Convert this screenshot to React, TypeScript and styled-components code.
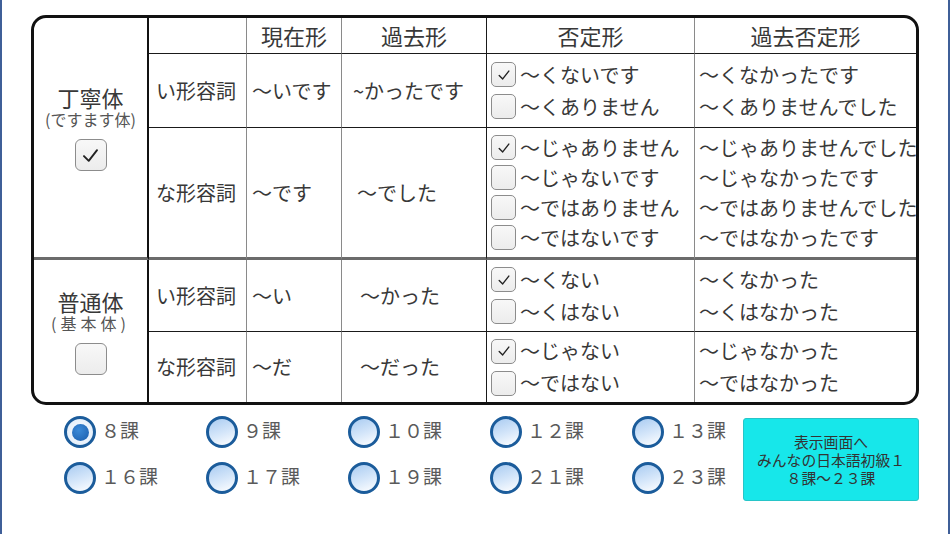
import styled, { createGlobalStyle } from "styled-components";

const GlobalStyle = createGlobalStyle`
  html, body {
    margin: 0;
    padding: 0;
    background: #ffffff;
  }
  body {
    font-family: "Noto Sans CJK JP", "Noto Sans", sans-serif;
    color: #383838;
  }
`;

const Screen = styled.div`
  box-sizing: border-box;
  width: 950px;
  height: 534px;
  border-left: 2px solid #3f5f98;
  border-right: 2px solid #3f5f98;
  padding: 15px 0 0 29px;
  background: #ffffff;
  overflow: hidden;
`;

const Table = styled.div`
  box-sizing: border-box;
  width: 888px;
  height: 390px;
  border: 3px solid #111111;
  border-radius: 15px;
  overflow: hidden;
  display: grid;
  grid-template-columns: 115px 98px 95px 145px 208px 221px;
  grid-template-rows: 36px 74px 132px 72px 70px;
`;

type Line = "black" | "gray" | "thick" | "none";

const lineCss = (l: Line) =>
  l === "black"
    ? "1.5px solid #1a1a1a"
    : l === "gray"
    ? "1px solid #8a8a8a"
    : l === "thick"
    ? "3px solid #6b6b6b"
    : "none";

const Cell = styled.div<{
  $right?: Line;
  $bottom?: Line;
  $span?: number;
  $align?: "left" | "center";
  $pad?: number;
}>`
  box-sizing: border-box;
  grid-row: span ${(p) => p.$span ?? 1};
  border-right: ${(p) => lineCss(p.$right ?? "gray")};
  border-bottom: ${(p) => lineCss(p.$bottom ?? "none")};
  display: flex;
  flex-direction: column;
  justify-content: center;
  align-items: ${(p) => (p.$align === "center" ? "center" : "flex-start")};
  padding-left: ${(p) => p.$pad ?? 0}px;
  font-size: 20px;
  line-height: 1.2;
  white-space: nowrap;
  color: #383838;
  overflow: visible;
`;

const SideCell = styled(Cell)<{ $lift: number }>`
  border-right: 2.5px solid #111111;
  align-items: center;
  padding-bottom: ${(p) => p.$lift}px;
`;

const HeadText = styled.span`
  font-size: 22px;
  color: #383838;
`;

const StyleName = styled.span`
  font-size: 22px;
  line-height: 27px;
  color: #383838;
`;

const StyleSub = styled.span<{ $spaced?: boolean }>`
  font-size: 16px;
  line-height: 20px;
  margin-top: -2px;
  color: #555555;
  letter-spacing: ${(p) => (p.$spaced ? "4px" : "0")};
  margin-bottom: 10px;
`;

const LineList = styled.div<{ $gap: number }>`
  display: flex;
  flex-direction: column;
  gap: ${(p) => p.$gap}px;
`;

const FormLine = styled.div`
  display: flex;
  align-items: center;
  gap: 4px;
  height: 26px;
  font-size: 20px;
`;

const Box = styled.span<{ $size: number }>`
  box-sizing: border-box;
  width: ${(p) => p.$size}px;
  height: ${(p) => p.$size}px;
  border: 1.5px solid #8c8c8c;
  border-radius: ${(p) => Math.round(p.$size / 5)}px;
  background: linear-gradient(#f8f8f8, #ececec);
  display: inline-flex;
  align-items: center;
  justify-content: center;
  flex-shrink: 0;
`;

function CheckBox({ checked, size }: { checked: boolean; size: number }) {
  const s = Math.round(size * 0.58);
  return (
    <Box $size={size}>
      {checked && (
        <svg width={s} height={s} viewBox="0 0 16 16">
          <polyline
            points="2.5,8.5 6.5,12.5 13.5,3.5"
            fill="none"
            stroke="#222"
            strokeWidth="1.6"
            strokeLinecap="round"
            strokeLinejoin="round"
          />
        </svg>
      )}
    </Box>
  );
}

const Bottom = styled.div`
  width: 888px;
  display: flex;
  justify-content: space-between;
  align-items: flex-start;
  margin-top: 13px;
`;

const RadioGrid = styled.div`
  display: grid;
  grid-template-columns: repeat(4, 142px) 100px;
  grid-auto-rows: 46px;
  padding-left: 33px;
  margin-top: -2px;
`;

const RadioItem = styled.label`
  display: flex;
  align-items: flex-start;
  gap: 5px;
  font-size: 19px;
  color: #5a5a5a;
`;

const RadioCircle = styled.span<{ $on: boolean }>`
  box-sizing: border-box;
  width: 32px;
  height: 32px;
  border-radius: 50%;
  border: 3px solid #1b5c9b;
  background: ${(p) =>
    p.$on
      ? "radial-gradient(circle, #ffffff 0%, #e6f0fb 70%, #c7dcf3 100%)"
      : "linear-gradient(160deg, #a9cbf1 0%, #d6e7fa 55%, #ffffff 100%)"};
  display: inline-flex;
  align-items: center;
  justify-content: center;
  flex-shrink: 0;
`;

const RadioDot = styled.span`
  width: 17px;
  height: 17px;
  border-radius: 50%;
  background: radial-gradient(circle at 40% 35%, #3b8ad8, #1a5cab);
`;

const RadioLabel = styled.span`
  line-height: 28px;
`;

const GoButton = styled.button`
  box-sizing: border-box;
  width: 176px;
  height: 83px;
  border: 1px solid #27c5c8;
  border-radius: 3px;
  background: #17e7ea;
  color: #333333;
  font-family: "Noto Sans CJK JP", "Noto Sans", sans-serif;
  font-size: 14.8px;
  line-height: 18px;
  padding: 0;
  cursor: pointer;
`;

const lessons = [
  "８課",
  "９課",
  "１０課",
  "１２課",
  "１３課",
  "１６課",
  "１７課",
  "１９課",
  "２１課",
  "２３課",
];

type NegForm = { text: string; checked: boolean };

function NegCell({
  forms,
  gap,
  bottom,
}: {
  forms: NegForm[];
  gap: number;
  bottom: Line;
}) {
  return (
    <Cell $right="gray" $bottom={bottom} $pad={4}>
      <LineList $gap={gap}>
        {forms.map((f) => (
          <FormLine key={f.text}>
            <CheckBox checked={f.checked} size={25} />
            <span>{f.text}</span>
          </FormLine>
        ))}
      </LineList>
    </Cell>
  );
}

function PastNegCell({
  forms,
  gap,
  bottom,
}: {
  forms: string[];
  gap: number;
  bottom: Line;
}) {
  return (
    <Cell $right="none" $bottom={bottom} $pad={4}>
      <LineList $gap={gap}>
        {forms.map((f) => (
          <FormLine key={f}>{f}</FormLine>
        ))}
      </LineList>
    </Cell>
  );
}

export default function App() {
  return (
    <>
      <GlobalStyle />
      <Screen>
        <Table>
          <SideCell $span={3} $bottom="thick" $lift={20}>
            <StyleName>丁寧体</StyleName>
            <StyleSub>(ですます体)</StyleSub>
            <CheckBox checked size={32} />
          </SideCell>
          <Cell $bottom="black" />
          <Cell $bottom="black" $align="center">
            <HeadText>現在形</HeadText>
          </Cell>
          <Cell $bottom="black" $right="black" $align="center">
            <HeadText>過去形</HeadText>
          </Cell>
          <Cell $bottom="black" $align="center">
            <HeadText>否定形</HeadText>
          </Cell>
          <Cell $bottom="black" $right="none" $align="center">
            <HeadText>過去否定形</HeadText>
          </Cell>

          <Cell $bottom="black" $pad={7}>い形容詞</Cell>
          <Cell $bottom="black" $pad={5}>～いです</Cell>
          <Cell $bottom="black" $right="black" $pad={11}>~かったです</Cell>
          <NegCell
            bottom="black"
            gap={6}
            forms={[
              { text: "～くないです", checked: true },
              { text: " ～くありません", checked: false },
            ]}
          />
          <PastNegCell
            bottom="black"
            gap={6}
            forms={["～くなかったです", "～くありませんでした"]}
          />

          <Cell $bottom="thick" $pad={7}>な形容詞</Cell>
          <Cell $bottom="thick" $pad={5}>～です</Cell>
          <Cell $bottom="thick" $right="black" $pad={15}>～でした</Cell>
          <NegCell
            bottom="thick"
            gap={4}
            forms={[
              { text: "～じゃありません", checked: true },
              { text: "～じゃないです", checked: false },
              { text: "～ではありません", checked: false },
              { text: "～ではないです", checked: false },
            ]}
          />
          <PastNegCell
            bottom="thick"
            gap={4}
            forms={[
              "～じゃありませんでした",
              "～じゃなかったです",
              "～ではありませんでした",
              "～ではなかったです",
            ]}
          />

          <SideCell $span={2} $lift={0}>
            <StyleName>普通体</StyleName>
            <StyleSub $spaced>(基本体)</StyleSub>
            <CheckBox checked={false} size={32} />
          </SideCell>
          <Cell $bottom="black" $pad={7}>い形容詞</Cell>
          <Cell $bottom="black" $pad={5}>～い</Cell>
          <Cell $bottom="black" $right="black" $pad={18}>～かった</Cell>
          <NegCell
            bottom="black"
            gap={6}
            forms={[
              { text: "～くない", checked: true },
              { text: "～くはない", checked: false },
            ]}
          />
          <PastNegCell
            bottom="black"
            gap={6}
            forms={["～くなかった", "～くはなかった"]}
          />

          <Cell $pad={7}>な形容詞</Cell>
          <Cell $pad={5}>～だ</Cell>
          <Cell $right="black" $pad={18}>～だった</Cell>
          <NegCell
            bottom="none"
            gap={6}
            forms={[
              { text: "～じゃない", checked: true },
              { text: "～ではない", checked: false },
            ]}
          />
          <PastNegCell
            bottom="none"
            gap={6}
            forms={["～じゃなかった", "～ではなかった"]}
          />
        </Table>

        <Bottom>
          <RadioGrid>
            {lessons.map((l, i) => (
              <RadioItem key={l}>
                <RadioCircle $on={i === 0}>{i === 0 && <RadioDot />}</RadioCircle>
                <RadioLabel>{l}</RadioLabel>
              </RadioItem>
            ))}
          </RadioGrid>
          <GoButton>
            表示画面へ
            <br />
            みんなの日本語初級１
            <br />
            ８課～２３課
          </GoButton>
        </Bottom>
      </Screen>
    </>
  );
}
